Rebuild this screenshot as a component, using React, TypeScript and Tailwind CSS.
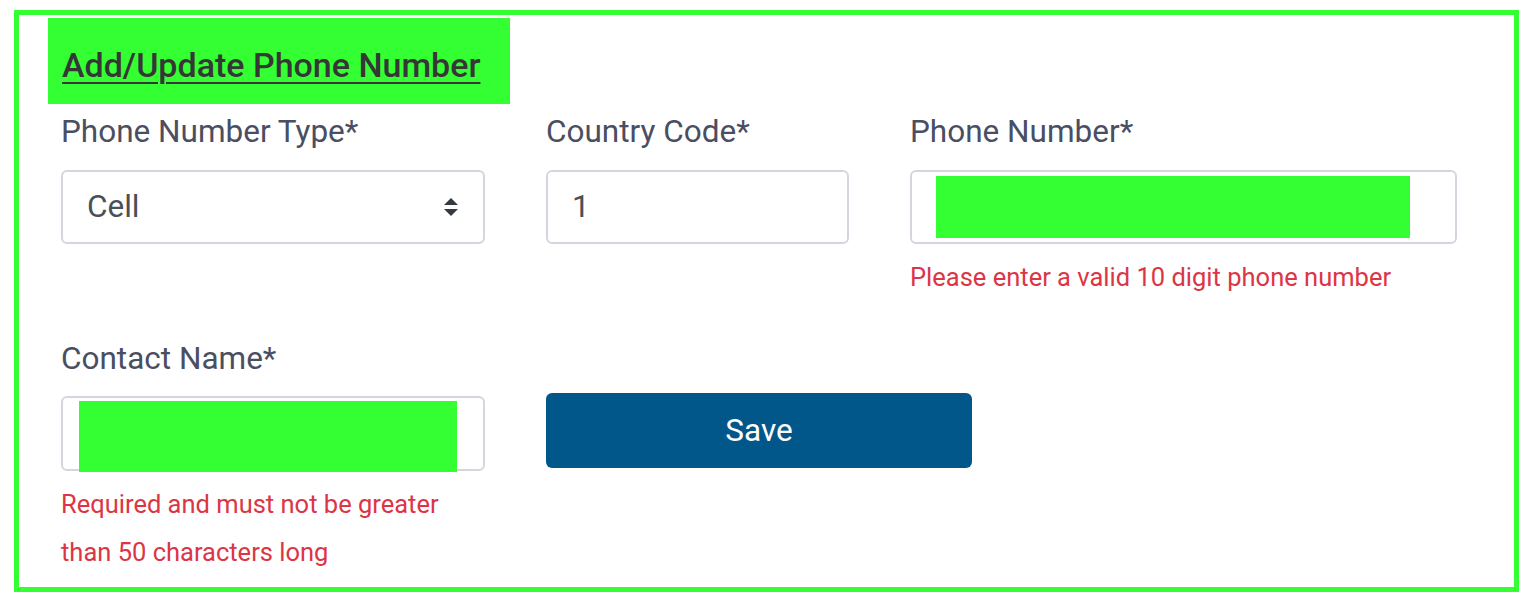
import React from "react";

const GREEN = "bg-[#33ff33]";

const Label: React.FC<{ text: string }> = ({ text }) => (
  <p className="h-[42px] text-[31.5px] leading-[44px] text-[#4a4e62]">{text}</p>
);

const ErrorText: React.FC<{ children: React.ReactNode }> = ({ children }) => (
  <p className="mt-[9px] text-[25.5px] leading-[48px] text-[#dc3545]">{children}</p>
);

const SortArrows = () => (
  <svg width="16" height="22" viewBox="0 0 16 22" className="text-[#343a40]">
    <path d="M8 2 L15 9 L1 9 Z" fill="currentColor" />
    <path d="M1 13 L15 13 L8 20 Z" fill="currentColor" />
  </svg>
);

const App: React.FC = () => {
  return (
    <div className="min-h-[603px] bg-white pl-[14px] pt-[10px] font-['Roboto',sans-serif]">
      <div className="h-[582px] w-[1505px] border-[5px] border-[#33ff33] bg-white">
        <div className={`ml-[29px] mt-[3px] h-[86px] w-[462px] ${GREEN} pl-[14px] pt-[27px]`}>
          <h2 className="text-[34px] font-medium leading-[40px] text-[#363636] underline decoration-2 underline-offset-[5px]">
            Add/Update Phone Number
          </h2>
        </div>

        <div className="ml-[42px] mt-[6px] flex items-start gap-[61px]">
          <div className="w-[424px]">
            <Label text="Phone Number Type*" />
            <div className="mt-[18px] flex h-[74px] items-center justify-between rounded-[6px] border-2 border-[#d3d7dd] pl-[24px] pr-[24px]">
              <span className="text-[31.5px] text-[#495057]">Cell</span>
              <SortArrows />
            </div>
          </div>

          <div className="w-[303px]">
            <Label text="Country Code*" />
            <div className="mt-[18px] flex h-[74px] items-center rounded-[6px] border-2 border-[#d3d7dd] pl-[24px]">
              <span className="text-[31.5px] text-[#495057]">1</span>
            </div>
          </div>

          <div className="w-[547px]">
            <Label text="Phone Number*" />
            <div className="mt-[18px] flex h-[74px] items-center rounded-[6px] border-2 border-[#d3d7dd] pl-[24px]">
              <div className={`h-[62px] w-[474px] ${GREEN}`} />
            </div>
            <ErrorText>Please enter a valid 10 digit phone number</ErrorText>
          </div>
        </div>

        <div className="ml-[42px] mt-[36px] flex items-start gap-[61px]">
          <div className="w-[424px]">
            <Label text="Contact Name*" />
            <div className="mt-[17px] flex h-[75px] items-center rounded-[6px] border-2 border-[#d3d7dd] pl-[16px]">
              <div className={`mt-[6px] h-[71px] w-[378px] ${GREEN}`} />
            </div>
            <ErrorText>
              Required and must not be greater than 50 characters long
            </ErrorText>
          </div>

          <button className="mt-[56px] h-[75px] w-[426px] rounded-[6px] bg-[#02578a] text-[31.5px] text-white">
            Save
          </button>
        </div>
      </div>
    </div>
  );
};

export default App;
